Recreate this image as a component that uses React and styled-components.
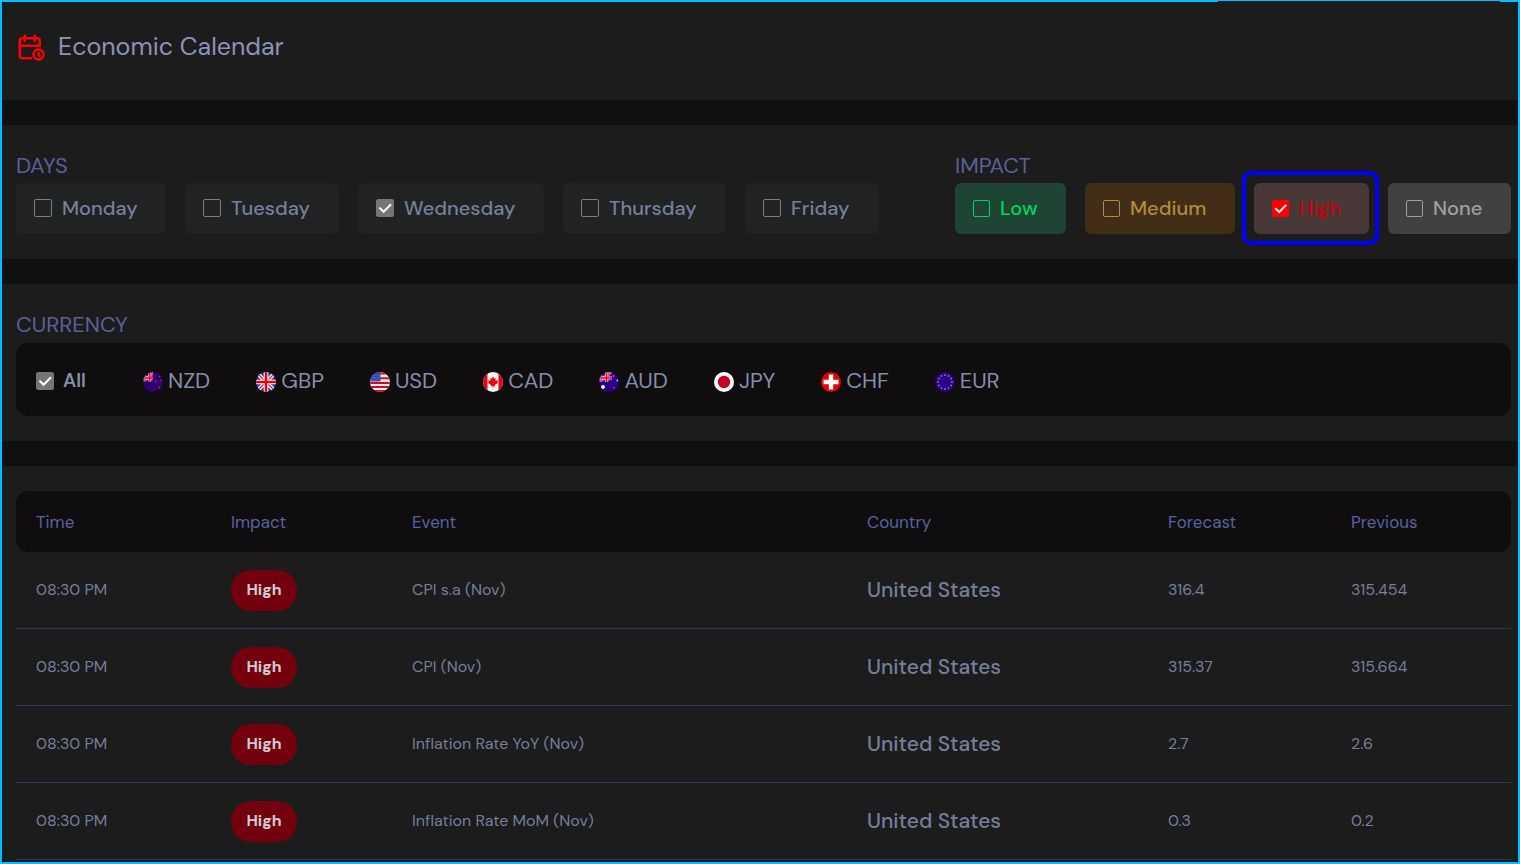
import React, { useId, useState } from "react";
import styled, { createGlobalStyle } from "styled-components";

const GlobalStyle = createGlobalStyle`
  *, *::before, *::after { box-sizing: border-box; }
  body {
    margin: 0;
    background: #1c1c1c;
    color: #757f9c;
    font-family: "DM Sans", Inter, "Liberation Sans", sans-serif;
  }
`;

const Page = styled.main`
  position: relative;
  min-height: 100vh;
  border: 2px solid #00bfff;
  background: #1c1c1c;

  &::before {
    content: "";
    position: absolute;
    top: -1px;
    right: 18px;
    width: 282px;
    height: 1px;
    background: #1c1c1c;
  }
`;

const Header = styled.header`
  display: flex;
  align-items: center;
  gap: 12px;
  padding: 26px 14px 34px;
  border-bottom: 25px solid #101010;
`;

const Title = styled.h1`
  margin: 0;
  font-size: 25px;
  line-height: 38px;
  font-weight: 400;
  color: #8c92b8;
`;

const Section = styled.section`
  padding: 27px 7px 25px 14px;
  border-bottom: 25px solid #101010;
`;

const FilterBar = styled(Section)`
  display: flex;
  justify-content: space-between;
  gap: 24px;
`;

const Group = styled.fieldset`
  margin: 0;
  padding: 0;
  border: 0;
  min-width: 0;
`;

const GroupLabel = styled.legend`
  padding: 0;
  font-size: 22px;
  line-height: 28px;
  color: #5a6098;
`;

const ChipRow = styled.div`
  display: flex;
  gap: 19px;
  margin-top: 3px;
`;

const Chip = styled.label`
  position: relative;
  display: flex;
  align-items: center;
  gap: 10px;
  width: ${(p) => p.$width}px;
  height: 51px;
  padding: 0 0 1px 18px;
  border-radius: 6px;
  background: ${(p) => p.$bg || "#212322"};
  color: ${(p) => p.$color || "#757f9e"};
  font-size: 20px;
  line-height: 24px;
  font-weight: 500;
  cursor: pointer;
`;

const FocusFrame = styled.span`
  position: absolute;
  inset: -12px -10px -11px -12px;
  border: 4px solid #0000ff;
  border-radius: 9px;
  pointer-events: none;
`;

const Box = styled.span`
  display: grid;
  flex: none;
  width: ${(p) => p.$size}px;
  height: ${(p) => p.$size}px;

  & > * {
    grid-area: 1 / 1;
    width: 100%;
    height: 100%;
  }
`;

const BoxInput = styled.input`
  appearance: none;
  margin: 0;
  border: 1px solid ${(p) => p.$color || "#7c7c7c"};
  border-radius: 2px;

  &:checked {
    background: ${(p) => p.$fill || "#757575"};
    border-color: ${(p) => p.$fill || "#757575"};
  }
  &:not(:checked) + svg { visibility: hidden; }
`;

const Tick = styled.svg`
  fill: none;
  stroke: #fff;
  stroke-width: 2;
  pointer-events: none;
`;

function Checkbox({ id, defaultChecked, color, fill, size = 18 }) {
  const [on, setOn] = useState(Boolean(defaultChecked));
  return (
    <Box $size={size}>
      <BoxInput
        id={id}
        type="checkbox"
        checked={on}
        onChange={(e) => setOn(e.target.checked)}
        $color={color}
        $fill={fill}
      />
      <Tick viewBox="0 0 18 18" aria-hidden="true">
        <path d="M3.4 8.6l4.2 4.2 7.4-7.6" />
      </Tick>
    </Box>
  );
}

const CurrencyPanel = styled.div`
  display: flex;
  align-items: center;
  gap: 46px;
  height: 73px;
  margin-top: 4px;
  padding: 2px 20px 0;
  border-radius: 12px;
  background: #0f0d0e;
`;

const AllOption = styled.label`
  display: flex;
  align-items: center;
  gap: 9px;
  width: 61px;
  font-size: 19px;
  line-height: 24px;
  font-weight: 600;
  color: #8890ab;
`;

const CurrencyButton = styled.button`
  display: flex;
  align-items: center;
  gap: 5px;
  padding: 0;
  border: 0;
  background: none;
  color: #858eac;
  font: inherit;
  font-size: 22px;
  line-height: 24px;
  cursor: pointer;
`;

const FlagSvg = styled.svg`
  flex: none;
  width: 20px;
  height: 20px;
  margin-top: 2px;
`;

const TableSection = styled.section`
  padding: 25px 7px 2px 14px;
`;

const Table = styled.table`
  width: 100%;
  table-layout: fixed;
  border-collapse: separate;
  border-spacing: 0;
  font-size: 16px;
  line-height: 24px;
`;

const HeadCell = styled.th`
  height: 61px;
  padding: 0 0 0 20px;
  background: #0f0d0e;
  color: #5a61a0;
  font-size: 17px;
  font-weight: 400;
  text-align: left;

  &:first-child { border-radius: 12px 0 0 12px; }
  &:last-child { border-radius: 0 12px 12px 0; }
`;

const Cell = styled.td`
  height: 77px;
  padding: 0 0 0 20px;
  border-bottom: 1px solid #33345c;
  font-size: ${(p) => (p.$large ? 21 : 16)}px;
  font-weight: ${(p) => (p.$large ? 500 : 400)};
`;

const Badge = styled.span`
  display: inline-flex;
  align-items: center;
  justify-content: center;
  width: 66px;
  height: 41px;
  border-radius: 20px;
  background: #72000d;
  color: #cfccd2;
  font-size: 16px;
  font-weight: 700;
  vertical-align: middle;
`;

const CalendarIcon = () => (
  <svg width="30" height="30" viewBox="0 0 24 24" fill="none" stroke="#ff0000" strokeWidth="2" strokeLinecap="round" strokeLinejoin="round" aria-hidden="true">
    <path d="M11.8 21H5a2 2 0 0 1-2-2V7a2 2 0 0 1 2-2h12a2 2 0 0 1 2 2v4" />
    <circle cx="18" cy="18" r="4" />
    <path d="M15 3v4M7 3v4M3 11h16M18 16.5V18l1 1" />
  </svg>
);

const Star = ({ x, y, r, fill }) => <circle cx={x} cy={y} r={r} fill={fill} />;

const CantonJack = () => (
  <>
    <path d="M0 0h11v10H0z" fill="#30209a" />
    <path d="M0 3l9 6M12 0L1 9" stroke="#f2c4dc" strokeWidth="2.6" />
    <path d="M0 3l9 6M12 0L1 9" stroke="#f0102c" strokeWidth="1.2" />
    <path d="M0 6h13M7.5 0v10" stroke="#f4c8dc" strokeWidth="2.8" />
    <path d="M0 6h13M7.5 0v10" stroke="#f00020" strokeWidth="1.6" />
  </>
);

const flagArt = {
  NZD: (
    <>
      <path d="M0 0h20v20H0z" fill="#2d006e" />
      <svg width="10" height="10" viewBox="0 0 11 10">
        <CantonJack />
      </svg>
      <Star x={16.5} y={4.5} r={0.8} fill="#d02060" />
      <Star x={13} y={9.5} r={0.9} fill="#d02060" />
      <Star x={18} y={8.5} r={0.8} fill="#d02060" />
      <Star x={16.5} y={15.5} r={1} fill="#d02060" />
    </>
  ),
  GBP: (
    <>
      <path d="M0 0h20v20H0z" fill="#1c3fb4" />
      <path d="M0 0l20 20M20 0L0 20" stroke="#f4f4f8" strokeWidth="4" />
      <path d="M0 0l20 20M20 0L0 20" stroke="#e8203a" strokeWidth="1.4" />
      <path d="M10 0v20M0 10h20" stroke="#fff" strokeWidth="4.6" />
      <path d="M10 0v20M0 10h20" stroke="#e50012" strokeWidth="2.6" />
    </>
  ),
  USD: (
    <>
      <path d="M0 0h20v20H0z" fill="#f5f2f2" />
      <path d="M0 1.4h20M0 6.2h20M0 11h20M0 15h20M0 19h20" stroke="#e2001e" strokeWidth="2" />
      <path d="M0 0h10.5v9.5H0z" fill="#2848b0" />
      <path d="M3 3h7M2 5.5h8M1 8h9" stroke="#91a5e0" strokeWidth="0.8" strokeDasharray="1 1.3" />
    </>
  ),
  CAD: (
    <>
      <path d="M0 0h20v20H0z" fill="#f4f4f4" />
      <path d="M0 0h4.5v20H0zM15.5 0H20v20h-4.5z" fill="#e80010" />
      <path d="M10 4.5l1.3 2.3 1.5-.7-.4 2.6 2.6-.6-.7 2 .8.7-3.3 2.3.2 1.2-1.6-.2v1.6h-.8v-1.6l-1.6.2.2-1.2-3.3-2.3.8-.7-.7-2 2.6.6-.4-2.6 1.5.7z" fill="#e80010" />
    </>
  ),
  AUD: (
    <>
      <path d="M0 0h20v20H0z" fill="#2a0088" />
      <svg width="13" height="10" viewBox="0 0 13 10">
        <CantonJack />
      </svg>
      <Star x={4} y={15} r={2} fill="#eeeaff" />
      <Star x={14.5} y={4} r={0.7} fill="#cabfff" />
      <Star x={18.3} y={8.5} r={0.9} fill="#cabfff" />
      <Star x={15} y={15.7} r={0.8} fill="#8f7fe0" />
    </>
  ),
  JPY: (
    <>
      <path d="M0 0h20v20H0z" fill="#fff" />
      <circle cx="10" cy="10" r="6.2" fill="#c80020" />
    </>
  ),
  CHF: (
    <>
      <path d="M0 0h20v20H0z" fill="#e60000" />
      <path d="M10 2.5v15M2.5 10h15" stroke="#fff" strokeWidth="4.4" />
    </>
  ),
  EUR: (
    <>
      <path d="M0 0h20v20H0z" fill="#28008c" />
      {Array.from({ length: 12 }, (_, i) => {
        const a = (i * Math.PI) / 6;
        return <Star key={i} x={10 + 7 * Math.sin(a)} y={10 - 7 * Math.cos(a)} r={0.9} fill="#8f8868" />;
      })}
    </>
  ),
};

function Flag({ code }) {
  const clip = useId();
  return (
    <FlagSvg viewBox="0 0 20 20" aria-hidden="true">
      <clipPath id={clip}>
        <circle cx="10" cy="10" r="10" />
      </clipPath>
      <g clipPath={`url(#${clip})`}>{flagArt[code]}</g>
    </FlagSvg>
  );
}

const days = [
  { name: "Monday", width: 150 },
  { name: "Tuesday", width: 154 },
  { name: "Wednesday", width: 186, checked: true },
  { name: "Thursday", width: 163 },
  { name: "Friday", width: 134 },
];

const impacts = [
  { name: "Low", width: 111, bg: "#1e4534", color: "#00d45a" },
  { name: "Medium", width: 150, bg: "#422e17", color: "#b28a40" },
  { name: "High", width: 115, bg: "#483838", color: "#c4000c", fill: "#ff0000", checked: true, framed: true },
  { name: "None", width: 123, bg: "#414141", color: "#a0a0a0" },
];

const columns = [
  { name: "Time", width: 195 },
  { name: "Impact", width: 181 },
  { name: "Event", width: 455 },
  { name: "Country", width: 301 },
  { name: "Forecast", width: 183 },
  { name: "Previous", width: 180 },
];

const events = [
  { event: "CPI s.a (Nov)", forecast: "316.4", previous: "315.454" },
  { event: "CPI (Nov)", forecast: "315.37", previous: "315.664" },
  { event: "Inflation Rate YoY (Nov)", forecast: "2.7", previous: "2.6" },
  { event: "Inflation Rate MoM (Nov)", forecast: "0.3", previous: "0.2" },
];

export default function App() {
  return (
    <>
      <GlobalStyle />
      <Page>
        <Header>
          <CalendarIcon />
          <Title>Economic Calendar</Title>
        </Header>
        <FilterBar>
          <Group>
            <GroupLabel>DAYS</GroupLabel>
            <ChipRow>
              {days.map((d) => (
                <Chip key={d.name} htmlFor={d.name} $width={d.width}>
                  <Checkbox id={d.name} defaultChecked={d.checked} />
                  {d.name}
                </Chip>
              ))}
            </ChipRow>
          </Group>
          <Group>
            <GroupLabel>IMPACT</GroupLabel>
            <ChipRow>
              {impacts.map((i) => (
                <Chip key={i.name} htmlFor={i.name} $width={i.width} $bg={i.bg} $color={i.color}>
                  <Checkbox id={i.name} defaultChecked={i.checked} color={i.color} fill={i.fill} size={17} />
                  {i.name}
                  {i.framed && <FocusFrame />}
                </Chip>
              ))}
            </ChipRow>
          </Group>
        </FilterBar>
        <Section>
          <Group>
            <GroupLabel>CURRENCY</GroupLabel>
            <CurrencyPanel>
              <AllOption htmlFor="all">
                <Checkbox id="all" defaultChecked />
                All
              </AllOption>
              {Object.keys(flagArt).map((code) => (
                <CurrencyButton key={code} type="button">
                  <Flag code={code} />
                  {code}
                </CurrencyButton>
              ))}
            </CurrencyPanel>
          </Group>
        </Section>
        <TableSection>
          <Table>
            <colgroup>
              {columns.map((c) => (
                <col key={c.name} width={c.width} />
              ))}
            </colgroup>
            <thead>
              <tr>
                {columns.map((c) => (
                  <HeadCell key={c.name} scope="col">{c.name}</HeadCell>
                ))}
              </tr>
            </thead>
            <tbody>
              {events.map((e) => (
                <tr key={e.event}>
                  <Cell>08:30 PM</Cell>
                  <Cell><Badge>High</Badge></Cell>
                  <Cell>{e.event}</Cell>
                  <Cell $large>United States</Cell>
                  <Cell>{e.forecast}</Cell>
                  <Cell>{e.previous}</Cell>
                </tr>
              ))}
            </tbody>
          </Table>
        </TableSection>
      </Page>
    </>
  );
}
